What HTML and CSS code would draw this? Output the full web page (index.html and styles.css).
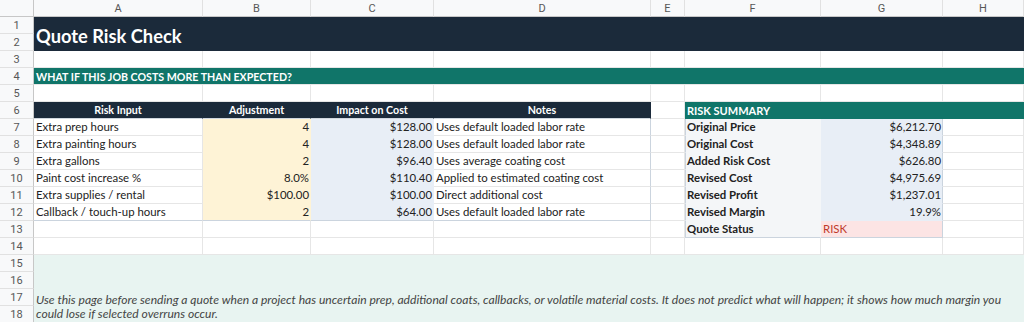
FILE: index.html
```html
<!DOCTYPE html>
<html>
<head>
<meta charset="utf-8">
<link rel="stylesheet" href="styles.css">
</head>
<body>
<div class="sheet">
  <div class="corner"></div>
  <div class="ch">A</div><div class="ch">B</div><div class="ch">C</div><div class="ch">D</div><div class="ch">E</div><div class="ch">F</div><div class="ch">G</div><div class="ch">H</div>

  <div class="rh">1</div>
  <div class="title">Quote Risk Check</div>
  <div class="rh">2</div>

  <div class="rh">3</div>
  <div class="c"></div><div class="c"></div><div class="c"></div><div class="c"></div><div class="c"></div><div class="c"></div><div class="c"></div><div class="c"></div>

  <div class="rh">4</div>
  <div class="band">WHAT IF THIS JOB COSTS MORE THAN EXPECTED?</div>

  <div class="rh">5</div>
  <div class="c"></div><div class="c"></div><div class="c"></div><div class="c"></div><div class="c"></div><div class="c"></div><div class="c"></div><div class="c"></div>

  <div class="rh">6</div>
  <div class="c th">Risk Input</div><div class="c th">Adjustment</div><div class="c th">Impact on Cost</div><div class="c th">Notes</div>
  <div class="c"></div>
  <div class="sumhead">RISK SUMMARY</div>

  <div class="rh">7</div>
  <div class="c lbl">Extra prep hours</div><div class="c adj">4</div><div class="c imp">$128.00</div><div class="c note">Uses default loaded labor rate</div>
  <div class="c"></div><div class="c flabel">Original Price</div><div class="c fval">$6,212.70</div><div class="c"></div>

  <div class="rh">8</div>
  <div class="c lbl">Extra painting hours</div><div class="c adj">4</div><div class="c imp">$128.00</div><div class="c note">Uses default loaded labor rate</div>
  <div class="c"></div><div class="c flabel">Original Cost</div><div class="c fval">$4,348.89</div><div class="c"></div>

  <div class="rh">9</div>
  <div class="c lbl">Extra gallons</div><div class="c adj">2</div><div class="c imp">$96.40</div><div class="c note">Uses average coating cost</div>
  <div class="c"></div><div class="c flabel">Added Risk Cost</div><div class="c fval">$626.80</div><div class="c"></div>

  <div class="rh">10</div>
  <div class="c lbl">Paint cost increase %</div><div class="c adj">8.0%</div><div class="c imp">$110.40</div><div class="c note">Applied to estimated coating cost</div>
  <div class="c"></div><div class="c flabel">Revised Cost</div><div class="c fval">$4,975.69</div><div class="c"></div>

  <div class="rh">11</div>
  <div class="c lbl">Extra supplies / rental</div><div class="c adj">$100.00</div><div class="c imp">$100.00</div><div class="c note">Direct additional cost</div>
  <div class="c"></div><div class="c flabel">Revised Profit</div><div class="c fval">$1,237.01</div><div class="c"></div>

  <div class="rh">12</div>
  <div class="c lbl last">Callback / touch-up hours</div><div class="c adj last">2</div><div class="c imp last">$64.00</div><div class="c note last">Uses default loaded labor rate</div>
  <div class="c"></div><div class="c flabel">Revised Margin</div><div class="c fval">19.9%</div><div class="c"></div>

  <div class="rh">13</div>
  <div class="c"></div><div class="c"></div><div class="c"></div><div class="c"></div>
  <div class="c"></div><div class="c flabel sumlast">Quote Status</div><div class="c fval status sumlast">RISK</div><div class="c"></div>

  <div class="rh">14</div>
  <div class="c"></div><div class="c"></div><div class="c"></div><div class="c"></div><div class="c"></div><div class="c"></div><div class="c"></div><div class="c"></div>

  <div class="rh">15</div>
  <div class="tip">Use this page before sending a quote when a project has uncertain prep, additional coats, callbacks, or volatile material costs. It does not predict what will happen; it shows how much margin you could lose if selected overruns occur.</div>
  <div class="rh">16</div>
  <div class="rh">17</div>
  <div class="rh">18</div>
</div>
</body>
</html>
```

FILE: styles.css
```css
html, body {
  margin: 0;
  padding: 0;
  background: #ffffff;
  overflow: hidden;
}

.sheet {
  display: grid;
  grid-template-columns: 34px 169px 108px 123px 217px 34px 136px 122px 81px;
  grid-template-rows: repeat(19, 17px);
  width: 1024px;
  font-family: Lato, "Liberation Sans", sans-serif;
  font-size: 11.4px;
  color: #222222;
}

.sheet > div {
  box-sizing: border-box;
  min-width: 0;
  overflow: hidden;
  white-space: nowrap;
}

.corner {
  background: #f8f9fa;
  border-right: 1px solid #c7c7c7;
  border-bottom: 1px solid #c7c7c7;
}

.ch {
  background: #f8f9fa;
  border-right: 1px solid #e1e1e1;
  border-bottom: 1px solid #c7c7c7;
  font-family: Roboto, "Liberation Sans", sans-serif;
  font-size: 11px;
  color: #575757;
  display: flex;
  align-items: center;
  justify-content: center;
}

.rh {
  background: #f8f9fa;
  border-right: 1px solid #c7c7c7;
  border-bottom: 1px solid #e1e1e1;
  font-family: Roboto, "Liberation Sans", sans-serif;
  font-size: 11px;
  color: #575757;
  display: flex;
  align-items: center;
  justify-content: center;
}

.c {
  border-right: 1px solid #e6e6e6;
  border-bottom: 1px solid #e6e6e6;
  padding: 0 3px;
  display: flex;
  align-items: center;
  line-height: 16px;
}

.title {
  grid-column: 2 / -1;
  grid-row: span 2;
  background: #1b2a3a;
  color: #ffffff;
  font-weight: 700;
  font-size: 18.3px;
  padding: 3px 2px 0;
  display: flex;
  align-items: center;
}

.band {
  grid-column: 2 / -1;
  background: #107569;
  color: #ffffff;
  font-weight: 700;
  font-size: 10.67px;
  padding: 0 2px;
  display: flex;
  align-items: center;
  border-bottom: 1px solid #e6e6e6;
}

.th {
  background: #1b2a3a;
  border-color: #1b2a3a;
  border-bottom-color: #d0d7df;
  color: #ffffff;
  font-weight: 700;
  font-size: 10.67px;
  justify-content: center;
}

.sumhead {
  grid-column: span 3;
  background: #107569;
  color: #ffffff;
  font-weight: 700;
  font-size: 11px;
  padding: 0 2px;
  display: flex;
  align-items: center;
}

.lbl {
  padding-left: 2px;
}

.adj {
  background: #fef3d6;
  border-color: #fef3d6;
  justify-content: flex-end;
  padding-right: 1px;
}

.imp {
  background: #e8eef6;
  border-color: #e8eef6;
  justify-content: flex-end;
  padding-right: 1px;
}

.note {
  padding-left: 2px;
  border-right-color: #cbd4de;
}

.last {
  border-bottom-color: #cbd4de;
}

.flabel {
  background: #f4f6f8;
  border-color: #f4f6f8;
  border-left: 1px solid #cbd4de;
  font-weight: 700;
  padding-left: 1px;
}

.fval {
  background: #e8eef6;
  border-color: #e8eef6;
  border-right-color: #cbd4de;
  justify-content: flex-end;
  padding-right: 1px;
}

.status {
  background: #fce4e4;
  border-color: #fce4e4;
  border-right-color: #cbd4de;
  color: #c0392b;
  justify-content: flex-start;
  padding-left: 2px;
}

.sumlast {
  border-bottom-color: #cbd4de;
}

.tip {
  grid-column: 2 / -1;
  grid-row: span 4;
  background: #e8f4f1;
  color: #444444;
  font-style: italic;
  font-size: 12.1px;
  line-height: 14px;
  white-space: normal !important;
  padding: 0 4px 2px 2px;
  display: flex;
  align-items: flex-end;
}
```
